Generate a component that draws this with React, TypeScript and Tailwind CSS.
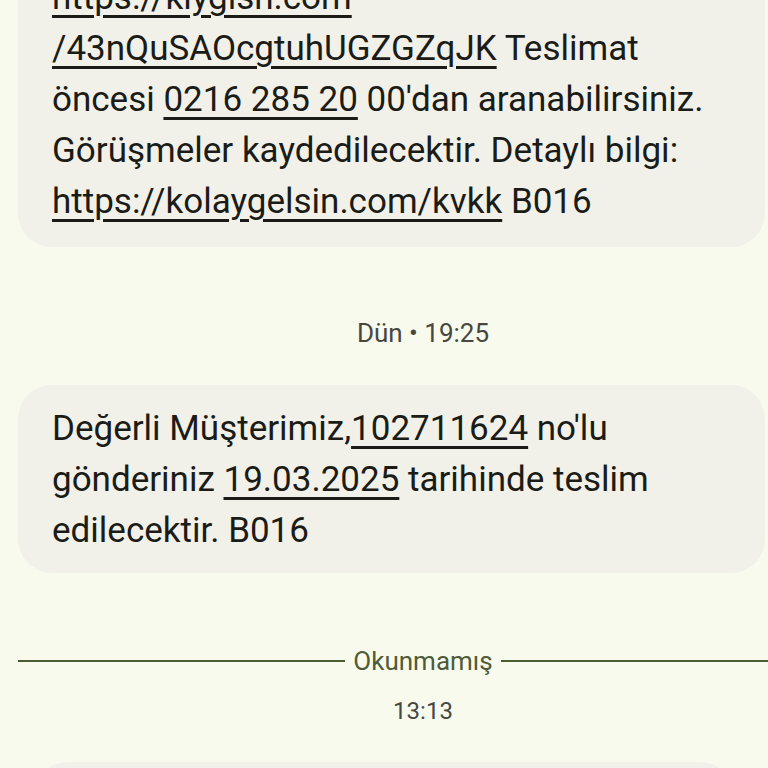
import React from "react";

const U = ({ children }: { children: React.ReactNode }) => (
  <span className="underline decoration-[2.5px] underline-offset-[6px]">{children}</span>
);

export default function App() {
  return (
    <div
      className="w-[768px] h-[768px] overflow-hidden bg-[#f8faee] text-[#1b1c17]"
      style={{ fontFamily: "Roboto, 'Noto Sans', sans-serif" }}
    >
      <div className="ml-[18px] w-[747px] mt-[-44px] rounded-[34px] bg-[#f1f1e9] pl-[34px] pr-[20px] pt-[16px] pb-[20px] text-[35px] leading-[51px] whitespace-nowrap">
        <U>https://kiygish.com</U>
        <br />
        <U>/43nQuSAOcgtuhUGZGZqJK</U> Teslimat
        <br />
        öncesi <U>0216 285 20</U> 00'dan aranabilirsiniz.
        <br />
        Görüşmeler kaydedilecektir. Detaylı bilgi:
        <br />
        <U>https://kolaygelsin.com/kvkk</U> B016
      </div>

      <div className="ml-[18px] w-[810px] mt-[71px] text-center text-[26px] leading-[30px] text-[#46483f]">
        Dün • 19:25
      </div>

      <div className="ml-[18px] w-[747px] mt-[37px] rounded-[34px] bg-[#f1f1e9] pl-[34px] pr-[20px] pt-[18px] pb-[17px] text-[35px] leading-[51px] whitespace-nowrap">
        Değerli Müşterimiz,<U>102711624</U> no'lu
        <br />
        gönderiniz <U>19.03.2025</U> tarihinde teslim
        <br />
        edilecektir. B016
      </div>

      <div className="ml-[18px] w-[810px] mt-[73px] flex items-center gap-[8px]">
        <div className="flex-1 h-[2px] bg-[#4d5b32]" />
        <div className="text-[26px] leading-[30px] text-[#4f5b37]">Okunmamış</div>
        <div className="flex-1 h-[2px] bg-[#4d5b32]" />
      </div>

      <div className="ml-[18px] w-[810px] mt-[20px] text-center text-[24px] leading-[30px] text-[#46483f]">
        13:13
      </div>

      <div className="ml-[34px] w-[700px] mt-[36px] h-[120px] rounded-[34px] bg-[#f1f1e9]" />
    </div>
  );
}
